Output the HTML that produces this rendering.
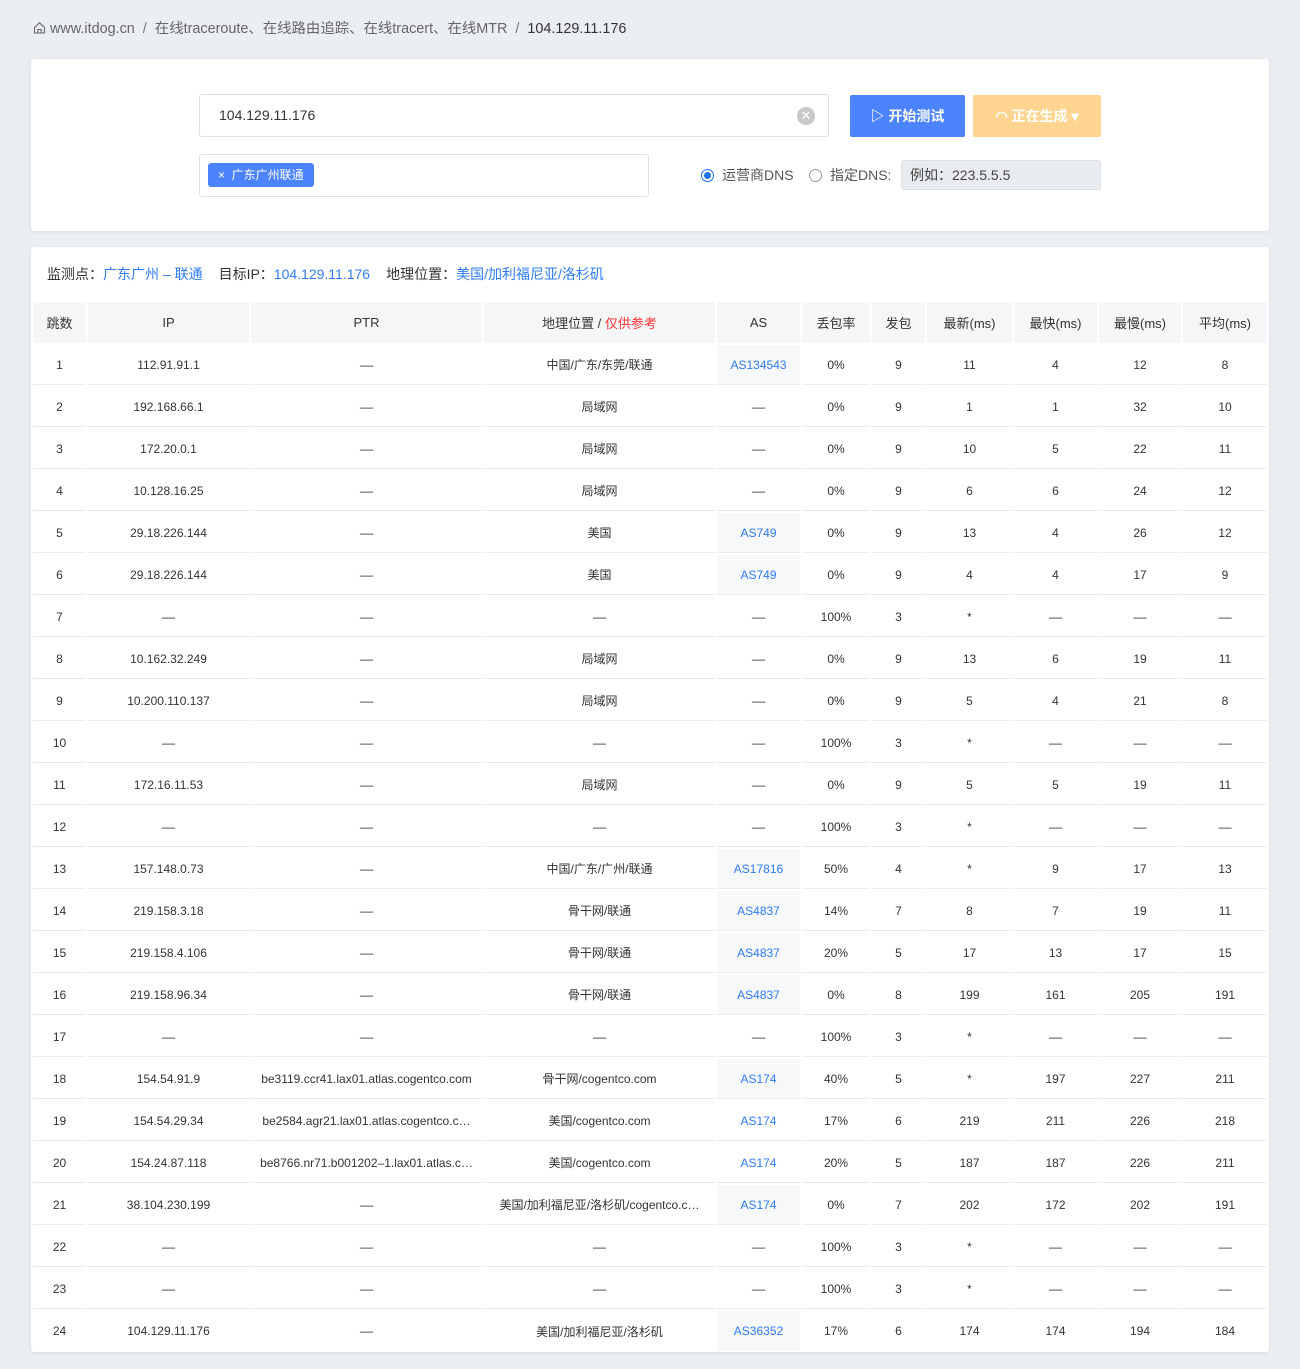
<!DOCTYPE html>
<html><head><meta charset="utf-8">
<style>
*{box-sizing:border-box;margin:0;padding:0}
body{width:1300px;height:1369px;background:#ebeef2;font-family:"Liberation Sans","Noto Sans CJK SC",sans-serif;color:#333;overflow:hidden;position:relative}
.bc{position:absolute;left:33px;top:19px;font-size:14.4px;color:#666;line-height:20px;white-space:nowrap}
.bc .sep{margin:0 8px;color:#777}
.bc .cur{color:#333}
.card{position:absolute;left:31px;width:1238px;background:#fff;border-radius:3px;box-shadow:0 1px 4px rgba(0,0,0,.08)}
.c1{top:59px;height:172px}
.c2{top:247px;height:1105px}
.inp{position:absolute;border:1px solid #dcdfe6;border-radius:3px;background:#fff}
.btn{position:absolute;border-radius:2px;color:#fff;font-size:14px;font-weight:bold;text-align:center;line-height:42px}
.tag{position:absolute;left:8px;top:8px;height:24px;background:#4c84ff;color:#fff;border-radius:3px;font-size:12px;line-height:24px;padding:0 10px}
.radio{position:absolute;top:108px;font-size:14px;color:#555;line-height:16px;white-space:nowrap}
.rc{display:inline-block;width:13px;height:13px;border-radius:50%;border:1px solid #999;vertical-align:-2px;margin-right:8px;position:relative}
.rc.on{border-color:#1a73e8}
.rc.on:after{content:"";position:absolute;left:2px;top:2px;width:7px;height:7px;border-radius:50%;background:#1a73e8}
.info{position:absolute;left:16px;top:17px;font-size:14px;color:#333;white-space:nowrap}
.info b{font-weight:normal;color:#2f7cf6;margin-right:16px}
table{position:absolute;left:0;top:53px;width:1238px;border-collapse:separate;border-spacing:2px;table-layout:fixed}
th{background:#f5f6f7;height:41px;font-weight:normal;font-size:13px;color:#333;border:0}
td{height:40px;font-size:12px;text-align:center;border-bottom:1px solid #e8ebee;color:#333;white-space:nowrap;overflow:hidden;text-overflow:ellipsis;padding:0 4px}
tr:last-child td{border-bottom:0}
td.as{color:#2f7cf6}
td.ash{background:#f6f8fa}
</style></head><body>
<div class="bc"><svg width="13" height="13" viewBox="0 0 13 13" style="vertical-align:-1px;margin-right:4px"><path d="M1.5 6.5 6.5 1.8 11.5 6.5V12H1.5Z" fill="none" stroke="#666" stroke-width="1.1"/><path d="M4.8 12V8.5h3.4V12" fill="none" stroke="#666" stroke-width="1.1"/></svg>www.itdog.cn<span class="sep">/</span>在线traceroute、在线路由追踪、在线tracert、在线MTR<span class="sep">/</span><span class="cur">104.129.11.176</span></div>

<div class="card c1">
 <div class="inp" style="left:168px;top:35px;width:630px;height:43px;font-size:14px;line-height:41px;padding-left:19px;color:#333">104.129.11.176
  <span style="position:absolute;right:13px;top:12px;width:18px;height:18px;border-radius:50%;background:#c8c8c8;color:#fff;font-size:13px;line-height:18px;text-align:center">✕</span></div>
 <div class="btn" style="left:819px;top:36px;width:115px;height:42px;background:#4c84ff">▷ 开始测试</div>
 <div class="btn" style="left:942px;top:36px;width:128px;height:42px;background:#ffd591">◠ 正在生成 ▾</div>
 <div class="inp" style="left:168px;top:95px;width:450px;height:43px"><div class="tag">×&nbsp;&nbsp;广东广州联通</div></div>
 <div class="radio" style="left:670px"><span class="rc on"></span>运营商DNS</div>
 <div class="radio" style="left:778px"><span class="rc"></span>指定DNS:</div>
 <div class="inp" style="left:870px;top:101px;width:200px;height:30px;background:#e9ecef;font-size:14px;line-height:28px;padding-left:8px;color:#444">例如：223.5.5.5</div>
</div>

<div class="card c2">
 <div class="info">监测点：<b>广东广州 – 联通</b>目标IP：<b>104.129.11.176</b>地理位置：<b style="margin:0">美国/加利福尼亚/洛杉矶</b></div>
 <table>
 <colgroup><col style="width:53px"><col style="width:161px"><col style="width:231px"><col style="width:231px"><col style="width:83px"><col style="width:68px"><col style="width:53px"><col style="width:85px"><col style="width:83px"><col style="width:82px"><col style="width:84px"></colgroup>
 <tr><th>跳数</th><th>IP</th><th>PTR</th><th>地理位置 / <span style="color:#f33">仅供参考</span></th><th>AS</th><th>丢包率</th><th>发包</th><th>最新(ms)</th><th>最快(ms)</th><th>最慢(ms)</th><th>平均(ms)</th></tr>
 <tr><td>1</td><td>112.91.91.1</td><td>––</td><td>中国/广东/东莞/联通</td><td class="as ash">AS134543</td><td>0%</td><td>9</td><td>11</td><td>4</td><td>12</td><td>8</td></tr>
 <tr><td>2</td><td>192.168.66.1</td><td>––</td><td>局域网</td><td>––</td><td>0%</td><td>9</td><td>1</td><td>1</td><td>32</td><td>10</td></tr>
 <tr><td>3</td><td>172.20.0.1</td><td>––</td><td>局域网</td><td>––</td><td>0%</td><td>9</td><td>10</td><td>5</td><td>22</td><td>11</td></tr>
 <tr><td>4</td><td>10.128.16.25</td><td>––</td><td>局域网</td><td>––</td><td>0%</td><td>9</td><td>6</td><td>6</td><td>24</td><td>12</td></tr>
 <tr><td>5</td><td>29.18.226.144</td><td>––</td><td>美国</td><td class="as ash">AS749</td><td>0%</td><td>9</td><td>13</td><td>4</td><td>26</td><td>12</td></tr>
 <tr><td>6</td><td>29.18.226.144</td><td>––</td><td>美国</td><td class="as ash">AS749</td><td>0%</td><td>9</td><td>4</td><td>4</td><td>17</td><td>9</td></tr>
 <tr><td>7</td><td>––</td><td>––</td><td>––</td><td>––</td><td>100%</td><td>3</td><td>*</td><td>––</td><td>––</td><td>––</td></tr>
 <tr><td>8</td><td>10.162.32.249</td><td>––</td><td>局域网</td><td>––</td><td>0%</td><td>9</td><td>13</td><td>6</td><td>19</td><td>11</td></tr>
 <tr><td>9</td><td>10.200.110.137</td><td>––</td><td>局域网</td><td>––</td><td>0%</td><td>9</td><td>5</td><td>4</td><td>21</td><td>8</td></tr>
 <tr><td>10</td><td>––</td><td>––</td><td>––</td><td>––</td><td>100%</td><td>3</td><td>*</td><td>––</td><td>––</td><td>––</td></tr>
 <tr><td>11</td><td>172.16.11.53</td><td>––</td><td>局域网</td><td>––</td><td>0%</td><td>9</td><td>5</td><td>5</td><td>19</td><td>11</td></tr>
 <tr><td>12</td><td>––</td><td>––</td><td>––</td><td>––</td><td>100%</td><td>3</td><td>*</td><td>––</td><td>––</td><td>––</td></tr>
 <tr><td>13</td><td>157.148.0.73</td><td>––</td><td>中国/广东/广州/联通</td><td class="as ash">AS17816</td><td>50%</td><td>4</td><td>*</td><td>9</td><td>17</td><td>13</td></tr>
 <tr><td>14</td><td>219.158.3.18</td><td>––</td><td>骨干网/联通</td><td class="as ash">AS4837</td><td>14%</td><td>7</td><td>8</td><td>7</td><td>19</td><td>11</td></tr>
 <tr><td>15</td><td>219.158.4.106</td><td>––</td><td>骨干网/联通</td><td class="as ash">AS4837</td><td>20%</td><td>5</td><td>17</td><td>13</td><td>17</td><td>15</td></tr>
 <tr><td>16</td><td>219.158.96.34</td><td>––</td><td>骨干网/联通</td><td class="as ash">AS4837</td><td>0%</td><td>8</td><td>199</td><td>161</td><td>205</td><td>191</td></tr>
 <tr><td>17</td><td>––</td><td>––</td><td>––</td><td>––</td><td>100%</td><td>3</td><td>*</td><td>––</td><td>––</td><td>––</td></tr>
 <tr><td>18</td><td>154.54.91.9</td><td>be3119.ccr41.lax01.atlas.cogentco.com</td><td>骨干网/cogentco.com</td><td class="as ash">AS174</td><td>40%</td><td>5</td><td>*</td><td>197</td><td>227</td><td>211</td></tr>
 <tr><td>19</td><td>154.54.29.34</td><td>be2584.agr21.lax01.atlas.cogentco.c…</td><td>美国/cogentco.com</td><td class="as">AS174</td><td>17%</td><td>6</td><td>219</td><td>211</td><td>226</td><td>218</td></tr>
 <tr><td>20</td><td>154.24.87.118</td><td>be8766.nr71.b001202–1.lax01.atlas.c…</td><td>美国/cogentco.com</td><td class="as">AS174</td><td>20%</td><td>5</td><td>187</td><td>187</td><td>226</td><td>211</td></tr>
 <tr><td>21</td><td>38.104.230.199</td><td>––</td><td>美国/加利福尼亚/洛杉矶/cogentco.c…</td><td class="as ash">AS174</td><td>0%</td><td>7</td><td>202</td><td>172</td><td>202</td><td>191</td></tr>
 <tr><td>22</td><td>––</td><td>––</td><td>––</td><td>––</td><td>100%</td><td>3</td><td>*</td><td>––</td><td>––</td><td>––</td></tr>
 <tr><td>23</td><td>––</td><td>––</td><td>––</td><td>––</td><td>100%</td><td>3</td><td>*</td><td>––</td><td>––</td><td>––</td></tr>
 <tr><td>24</td><td>104.129.11.176</td><td>––</td><td>美国/加利福尼亚/洛杉矶</td><td class="as ash">AS36352</td><td>17%</td><td>6</td><td>174</td><td>174</td><td>194</td><td>184</td></tr>
 </table>
</div>
</body></html>
